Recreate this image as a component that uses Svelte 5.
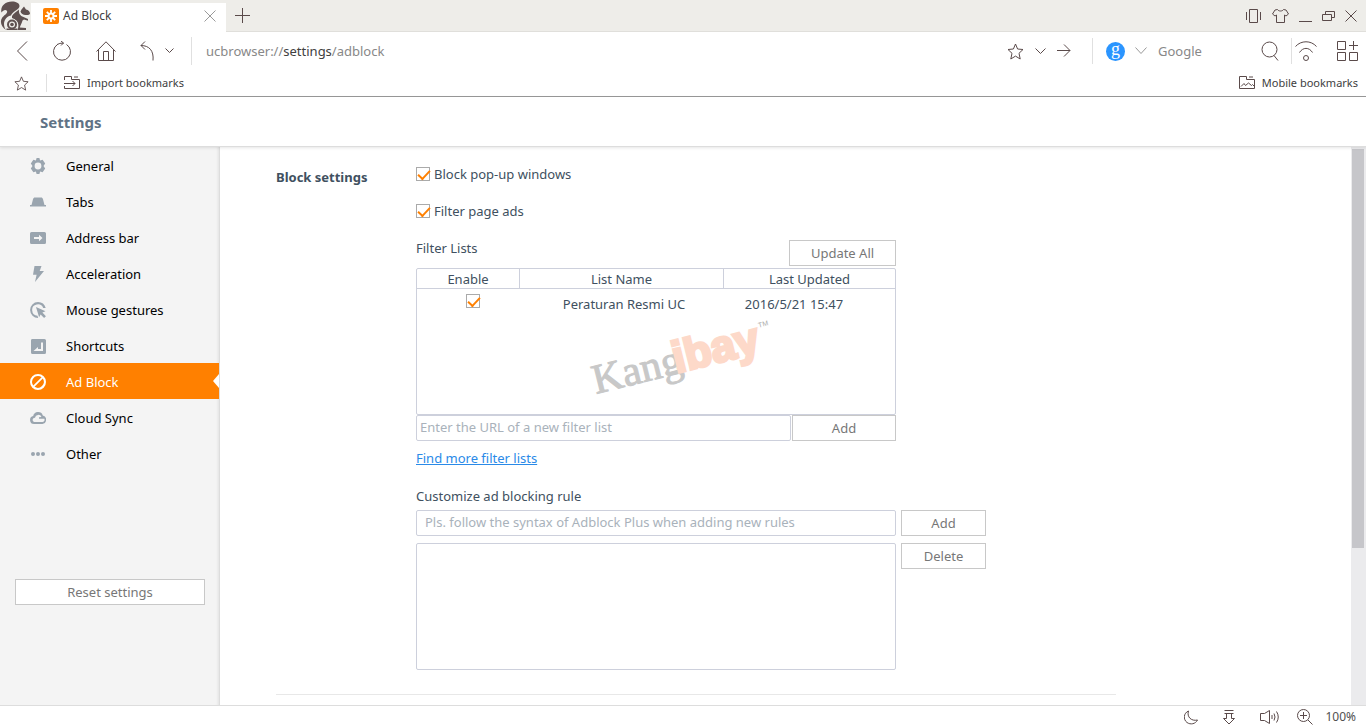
<script lang="ts">
    const menu = [
        { name: 'General', icon: 'M6.6 0h2.8l.7 2.5 2.5-.7 2.6 3.6L13.5 8l1.7 2.6-2.6 3.6-2.5-.7L9.4 16H6.6l-.7-2.5-2.5.7L.8 10.6 2.5 8 .8 5.4l2.6-3.6 2.5.7zM8 4.6a3.4 3.4 0 1 0 0 6.8 3.4 3.4 0 0 0 0-6.8z' },
        { name: 'Tabs', icon: 'M0 12.6v-1.6h1.5L3 5.2C3.3 4 4 3.5 5 3.5h6c1 0 1.7.5 2 1.7l1.5 5.8H16v1.6z' },
        { name: 'Address bar', icon: 'M1.5 2h13A1.5 1.5 0 0 1 16 3.5v9a1.5 1.5 0 0 1-1.5 1.5h-13A1.5 1.5 0 0 1 0 12.5v-9A1.5 1.5 0 0 1 1.5 2zM4 7v2h5v2.2L12.5 8 9 4.8V7z' },
        { name: 'Acceleration', icon: 'M4.5 0h7L9.7 5H14L5 16l1.6-7.3H3z' },
        { name: 'Mouse gestures', icon: 'M8 0a8 8 0 0 1 7.7 6h-2.5A5.7 5.7 0 1 0 7.5 13.7L8.2 16A8 8 0 1 1 8 0zM6 5l9.5 4.3-3.1 1.3 3.5 3.6-1.8 1.7-3.5-3.5-1.5 2.8z' },
        { name: 'Shortcuts', icon: 'M2 1h12.5A1.5 1.5 0 0 1 16 2.5v12a1.5 1.5 0 0 1-1.5 1.5H2.5A1.5 1.5 0 0 1 1 14.5v-12A1.5 1.5 0 0 1 2 1zM11 4.5V11H8V9l-4.5 4H13V4.5z' },
        { name: 'Ad Block', icon: 'M8 0a8 8 0 1 1 0 16A8 8 0 0 1 8 0zM8 2a6 6 0 0 0-4.7 9.6L11.6 3.3A6 6 0 0 0 8 2zM12.8 4.5L4.5 12.8A6 6 0 0 0 12.8 4.5z' },
        { name: 'Cloud Sync', icon: 'M4 14a4 4 0 0 1-.8-7.9A5 5 0 0 1 12.8 5.4 4.4 4.4 0 0 1 12.5 14zM4.2 12h8.2a2.4 2.4 0 0 0 2-3.2H9V7.2l2.5-.2A3.4 3.4 0 0 0 5 7.7 2.2 2.2 0 0 0 4.2 12z' },
        { name: 'Other', icon: 'M3 6a2 2 0 1 1 0 4 2 2 0 0 1 0-4zM8 6a2 2 0 1 1 0 4 2 2 0 0 1 0-4zM13 6a2 2 0 1 1 0 4 2 2 0 0 1 0-4z' }
    ];

    let current = $state('Ad Block');
    let blockPopups = $state(true);
    let filterAds = $state(true);
    let lists = $state([{ enabled: true, name: 'Peraturan Resmi UC', updated: '2016/5/21 15:47' }]);
    let listUrl = $state('');
    let rule = $state('');
    let rules = $state('');

    function addList() {
        if (!listUrl) return;
        lists.push({ enabled: true, name: listUrl, updated: '' });
        listUrl = '';
    }

    function addRule() {
        if (!rule) return;
        rules += rule + '\n';
        rule = '';
    }
</script>

<div class="browser">
    <header class="titlebar">
        <svg class="logo" width="31" height="31" viewBox="0 0 31 31" aria-hidden="true">
            <path d="M1.5 12.5C0 7 4.5 1.500 12 1.500c4 0 7.500 1.500 7.500 4.500 0 4-7 5-8.500 9.500C8 16 4 19 4 24c0 2.500.8 4.200 2 6C1.500 27.500-.500 22 2 18c2-3 6-4.500 5-7-1-1.800-4-1-5.500 1.500z" />
            <path d="M12 16c1.500-3 4-3.500 7-6.500C18.500 13 20 16 23.500 17l4.500 2v1.800l-4-1.300-1.500 1C22 23 20.500 25 19.800 27.500l6.200.5v2h-8.500c2-5 1-9.500-5.500-12z" />
            <path d="M20.500 11.500l1-2L24 6.500l2 3c2.500.500 4 2 4 4.500-1 1-2.500 1-4.500 1-2.500 0-4.500-1.500-5-3.500z" />
            <circle cx="12" cy="24.500" r="5.800" class="gap" />
            <circle cx="12" cy="24.500" r="4" class="ring" />
            <circle cx="12" cy="24.500" r="1.800" />
            <path d="M6.500 28.500h11V30h-11z" />
        </svg>
        <div class="tab">
            <svg width="16" height="16" viewBox="0 0 16 16" aria-hidden="true">
                <rect width="16" height="16" rx="2" fill="#ff8000" />
                <path d="M8 2v12M2 8h12M3.8 3.8l8.4 8.4M12.2 3.8l-8.4 8.4" stroke="#fff" stroke-width="1.8" />
                <circle cx="8" cy="8" r="3.5" fill="#fff" />
                <circle cx="8" cy="8" r="1.5" fill="#ff8000" />
            </svg>
            <span class="tab-title">Ad Block</span>
            <button class="icon light" aria-label="Close tab">
                <svg width="12" height="12" viewBox="0 0 12 12"><path d="M.5.500l11 11M11.500.500l-11 11" /></svg>
            </button>
        </div>
        <button class="icon new-tab" aria-label="New tab">
            <svg width="15" height="15" viewBox="0 0 15 15"><path d="M7.500 0v15M0 7.500h15" /></svg>
        </button>
        <div class="window-controls">
            <button class="icon" aria-label="Phone">
                <svg width="16" height="14" viewBox="0 0 16 14"><path d="M3.500.500h8v13h-8zM.5 3v8M14.500 3v8" /></svg>
            </button>
            <button class="icon" aria-label="Skins">
                <svg width="17" height="14" viewBox="0 0 17 14"><path d="M5.500.500c1 2 5 2 6 0l2.500.500 2.500 4-2.500 2-1.500-1v7.500h-8V6L3 7 .500 5 3 1z" /></svg>
            </button>
            <button class="icon" aria-label="Minimize">
                <svg width="13" height="14" viewBox="0 0 13 14"><path d="M0 12.500h13" /></svg>
            </button>
            <button class="icon" aria-label="Restore">
                <svg width="13" height="12" viewBox="0 0 13 12"><path d="M.5 4.500h9v6h-9zM3.500 4V1.500h9v6H10" /></svg>
            </button>
            <button class="icon" aria-label="Close">
                <svg width="12" height="12" viewBox="0 0 12 12"><path d="M.5.500l11 11M11.500.500l-11 11" /></svg>
            </button>
        </div>
    </header>

    <div class="toolbar">
        <div class="nav">
            <button class="icon" aria-label="Back">
                <svg width="12" height="20" viewBox="0 0 12 20"><path d="M11 .500l-9.500 9.500 9.500 9.500" /></svg>
            </button>
            <button class="icon" aria-label="Reload">
                <svg width="20" height="20" viewBox="0 0 20 20"><path d="M5.500 3.500A8.500 8.500 0 1 0 14.500 3.500M5 3.600Q7.500 2 11.500 2M9 0l2.500 2L9 4.500" /></svg>
            </button>
            <button class="icon" aria-label="Home">
                <svg width="20" height="20" viewBox="0 0 20 20"><path d="M.5 10.500L10 .8l9.500 9.700M2.500 9v10.500h15V9M7.500 19.500v-9h5v9" /></svg>
            </button>
            <button class="icon" aria-label="Undo">
                <svg width="14" height="20" viewBox="0 0 14 20"><path d="M5 .500l-4 4 4 4M1 4.500c8 0 13 5 12 15" /></svg>
            </button>
            <button class="icon" aria-label="Closed tabs">
                <svg width="9" height="6" viewBox="0 0 9 6"><path d="M.5.500l4 4 4-4" /></svg>
            </button>
        </div>
        <div class="address" role="textbox" tabindex="0" aria-label="Address" contenteditable="true">ucbrowser://<b>settings</b>/adblock</div>
        <div class="page-actions">
            <button class="icon" aria-label="Bookmark page">
                <svg width="17" height="17" viewBox="0 0 17 17"><path d="M8.500 1l2.100 5 5.400.5-4 3.800 1.200 5.700-4.700-2.900L3.800 16 5 10.300 1 6.500 6.400 6z" /></svg>
            </button>
            <button class="icon" aria-label="History">
                <svg width="11" height="7" viewBox="0 0 11 7"><path d="M.5.500l5 5 5-5" /></svg>
            </button>
            <button class="icon" aria-label="Go">
                <svg width="14" height="14" viewBox="0 0 14 14"><path d="M0 6.500h13M7 .500l6 6-6 6" /></svg>
            </button>
        </div>
        <div class="search">
            <span class="engine" aria-hidden="true">g</span>
            <button class="icon light" aria-label="Search engine">
                <svg width="12" height="8" viewBox="0 0 12 8"><path d="M.5.500L6 6.500 11.500.500" /></svg>
            </button>
            <input type="text" placeholder="Google" aria-label="Search" />
            <button class="icon" aria-label="Search">
                <svg width="18" height="20" viewBox="0 0 18 20"><circle cx="8.5" cy="8.5" r="7.5" /><path d="M13 14.500l4 5" /></svg>
            </button>
        </div>
        <div class="extras">
            <button class="icon" aria-label="Wi-Fi">
                <svg width="22" height="20" viewBox="0 0 22 20"><path d="M.5 5.500C6-.8 16-.8 21.500 5.500M4.500 11.500c3.500-5.500 9.500-5.500 13 0" /><circle cx="11" cy="17" r="2.5" /></svg>
            </button>
            <button class="icon" aria-label="Apps">
                <svg width="21" height="20" viewBox="0 0 21 20"><path d="M.5.500h8v8h-8zM.5 11.500h8v8h-8zM12.500 11.500h8v8h-8zM16.500 0v9M12 4.500h9" /></svg>
            </button>
        </div>
    </div>

    <div class="bookmarks">
        <button class="icon star" aria-label="Bookmarks">
            <svg width="15" height="15" viewBox="0 0 17 17"><path d="M8.500 1l2.100 5 5.400.5-4 3.800 1.200 5.700-4.700-2.900L3.800 16 5 10.300 1 6.500 6.400 6z" /></svg>
        </button>
        <button class="bookmark import">
            <svg width="17" height="14" viewBox="0 0 17 14"><path d="M.5 4V.500h7v3h8v9H.500V10M0 7.500h11M8.500 5l2.500 2.500L8.500 10M10 1h4" /></svg>
            Import bookmarks
        </button>
        <button class="bookmark mobile">
            <svg width="17" height="14" viewBox="0 0 17 14"><path d="M.5.500h7v3h8v9H.500zM10 1h4M2 10.500l3-3 1.500 2 3-2.500 3 2.500 1-1 2 2" /></svg>
            Mobile bookmarks
        </button>
    </div>

    <h1>Settings</h1>

    <div class="page">
        <nav class="sidebar">
            {#each menu as item}
                <button class="item" class:active={current === item.name} onclick={() => (current = item.name)}>
                    <svg width="16" height="16" viewBox="0 0 16 16" aria-hidden="true">
                        <path fill-rule="evenodd" d={item.icon} />
                    </svg>
                    {item.name}
                </button>
            {/each}
            <button class="plain reset">Reset settings</button>
        </nav>

        <main>
            <section>
                <h2>Block settings</h2>
                <div class="fields">
                    <label class="check"><input type="checkbox" bind:checked={blockPopups} />Block pop-up windows</label>
                    <label class="check"><input type="checkbox" bind:checked={filterAds} />Filter page ads</label>

                    <div class="lists">
                        <div class="lists-head">
                            <span>Filter Lists</span>
                            <button class="plain update">Update All</button>
                        </div>
                        <div class="list-box">
                            <table>
                                <thead>
                                    <tr><th>Enable</th><th>List Name</th><th>Last Updated</th></tr>
                                </thead>
                                <tbody>
                                    {#each lists as list}
                                        <tr>
                                            <td class="enable"><input type="checkbox" aria-label="Enable {list.name}" bind:checked={list.enabled} /></td>
                                            <td class="name">{list.name}</td>
                                            <td class="updated">{list.updated}</td>
                                        </tr>
                                    {/each}
                                </tbody>
                            </table>
                            <svg class="watermark" width="220" height="110" viewBox="0 0 220 110" aria-hidden="true">
                                <g transform="translate(22 88) rotate(-14)">
                                    <text class="kang" x="0" y="0">Kang</text>
                                    <text class="ibay" x="83" y="-1">ibay</text>
                                    <text class="tm" x="174" y="-25">TM</text>
                                </g>
                            </svg>
                        </div>
                        <div class="add-list">
                            <input type="text" aria-label="Filter list URL" placeholder="Enter the URL of a new filter list" bind:value={listUrl} />
                            <button class="plain" onclick={addList}>Add</button>
                        </div>
                    </div>

                    <a href="#lists">Find more filter lists</a>

                    <label class="rule-label" for="rule">Customize ad blocking rule</label>
                    <div class="rules">
                        <input id="rule" type="text" placeholder="Pls. follow the syntax of Adblock Plus when adding new rules" bind:value={rule} />
                        <button class="plain" onclick={addRule}>Add</button>
                        <textarea aria-label="Rules" bind:value={rules}></textarea>
                        <button class="plain" onclick={() => (rules = '')}>Delete</button>
                    </div>
                </div>
            </section>
        </main>

        <div class="scrollbar"><div class="thumb"></div></div>
    </div>

    <footer>
        <button class="icon" aria-label="Night mode">
            <svg width="14" height="15" viewBox="0 0 14 15"><path d="M4.500 1C-.5 3-1 9.500 3 12.500c3.500 2.500 8.500 1.500 10.500-2.500C7.500 11.500 2.500 7 4.500 1z" /></svg>
        </button>
        <button class="icon" aria-label="Downloads">
            <svg width="14" height="15" viewBox="0 0 14 15"><path d="M2.500.500h9M2.500 3.500h9M4.500 3.500v5h-3L7 14l5.500-5.500h-3v-5" /></svg>
        </button>
        <button class="icon" aria-label="Sound">
            <svg width="19" height="14" viewBox="0 0 19 14"><path d="M4.500 3.500h-4v7h4l5 3V.500zM12 5v4M14 3.500q2 3.500 0 7M16.500 1.500q3.500 5.500 0 11" /></svg>
        </button>
        <button class="icon" aria-label="Zoom in">
            <svg width="16" height="16" viewBox="0 0 16 16"><circle cx="6.5" cy="6.5" r="6" /><path d="M6.500 3v7M3 6.500h7M11 11l4.500 4.500" /></svg>
        </button>
        <span>100%</span>
    </footer>
</div>

<style>
    :global(body) {
        margin: 0;
        background-color: #fff;
    }

    .browser {
        height: 100vh;
        display: flex;
        flex-direction: column;
        overflow: hidden;
        font: 13px/18px "Noto Sans", sans-serif;
        color: #405060;
    }

    .browser * {
        box-sizing: border-box;
    }

    button, input, textarea {
        margin: 0;
        padding: 0;
        font: inherit;
        color: inherit;
        outline: none;
    }

    button {
        border: none;
        background: none;
    }

    svg {
        display: block;
        flex: none;
    }

    .icon, .bookmark {
        display: flex;
        align-items: center;
        justify-content: center;
    }

    .icon svg, .bookmark svg {
        fill: none;
        stroke: #5a4a4a;
    }

    .icon.light svg {
        stroke: #999;
    }

    /* Title bar */
    .titlebar {
        height: 32px;
        flex: none;
        display: flex;
        align-items: center;
        background-color: #eeede9;
        border-bottom: 1px solid #e0dfdb;
    }

    .logo {
        fill: #5f5150;
    }

    .logo .gap {
        fill: #eeede9;
    }

    .logo .ring {
        fill: none;
        stroke: #5f5150;
        stroke-width: 2px;
    }

    .tab {
        width: 195px;
        height: 29px;
        margin-bottom: -4px;
        padding: 0 10px 4px 12px;
        display: flex;
        align-items: center;
        gap: 4px;
        background-color: #fff;
        font-size: 12px;
        color: #404040;
    }

    .tab-title {
        flex: 1;
    }

    .new-tab {
        margin-left: 9px;
    }

    .window-controls {
        margin-left: auto;
        padding-right: 9px;
        display: flex;
        align-items: center;
        gap: 10px;
    }

    /* Toolbar */
    .toolbar {
        height: 38px;
        flex: none;
        display: flex;
        align-items: center;
    }

    .nav {
        height: 28px;
        padding: 0 17px 0 16px;
        display: flex;
        align-items: center;
        gap: 24px;
        border-right: 1px solid #e0e0e0;
    }

    .nav .icon:last-child {
        margin-left: -13px;
    }

    .address {
        flex: 1;
        padding-left: 14px;
        color: #888;
        outline: none;
    }

    .address b {
        font-weight: normal;
        color: #404040;
    }

    .page-actions {
        height: 26px;
        padding-right: 21px;
        display: flex;
        align-items: center;
        gap: 11px;
        border-right: 1px solid #e0e0e0;
    }

    .search {
        width: 199px;
        height: 26px;
        padding: 0 12px 0 13px;
        display: flex;
        align-items: center;
        border-right: 1px solid #e0e0e0;
    }

    .engine {
        width: 19px;
        height: 19px;
        margin-right: 10px;
        flex: none;
        border-radius: 50%;
        background-color: #2b95ff;
        color: #fff;
        font: 18px/14px "Liberation Serif", serif;
        text-align: center;
    }

    .extras {
        padding: 0 8px 0 3px;
        display: flex;
        gap: 20px;
    }

    /* Bookmarks bar */
    .bookmarks {
        height: 27px;
        flex: none;
        padding: 0 8px 0 14px;
        display: flex;
        align-items: center;
        border-bottom: 1px solid #999;
        font-size: 11px;
        color: #404040;
    }

    .star {
        height: 18px;
        padding-right: 17px;
        border-right: 1px solid #e0e0e0;
    }

    .bookmark {
        gap: 6px;
    }

    .import {
        margin-left: 17px;
    }

    .mobile {
        margin-left: auto;
    }

    h1 {
        height: 50px;
        flex: none;
        margin: 0;
        padding-left: 40px;
        border-bottom: 1px solid #ddd;
        box-shadow: 0 1px 3px rgba(0, 0, 0, .1);
        font-size: 15px;
        line-height: 51px;
        color: #5f7285;
        position: relative;
    }

    .page {
        min-height: 0;
        flex: 1;
        display: flex;
    }

    /* Sidebar */
    .sidebar {
        width: 220px;
        flex: none;
        display: flex;
        flex-direction: column;
        background-color: #f4f4f4;
        border-right: 1px solid #ddd;
        box-shadow: inset -3px 0 3px -2px rgba(0, 0, 0, .08);
    }

    .item {
        height: 36px;
        padding: 2px 0 0 30px;
        display: flex;
        align-items: center;
        gap: 20px;
        color: #000;
        position: relative;
    }

    .item svg {
        fill: #9aa5af;
    }

    .item.active {
        background-color: #ff8000;
        color: #fff;
    }

    .item.active svg {
        fill: #fff;
    }

    .item.active::after {
        content: "";
        position: absolute;
        top: 11px;
        right: 0;
        border: 7px solid transparent;
        border-left: none;
        border-right: 6px solid #fff;
    }

    .plain {
        height: 26px;
        background-color: #fff;
        border: 1px solid #c8c8c8;
        color: #777;
    }

    .reset {
        margin: auto 14px 100px 15px;
    }

    /* Content */
    main {
        min-width: 0;
        flex: 1;
        overflow: hidden;
        padding: 18px 56px 0;
    }

    section {
        max-width: 840px;
        padding-bottom: 24px;
        display: flex;
        border-bottom: 1px solid #e8e8e8;
    }

    h2 {
        width: 140px;
        flex: none;
        margin: 0;
        font-size: 13px;
        line-height: 24px;
    }

    .fields {
        width: 570px;
        display: flex;
        flex-direction: column;
        align-items: flex-start;
    }

    .check {
        height: 18px;
        margin-bottom: 19px;
        display: flex;
        align-items: center;
        gap: 4px;
    }

    input[type="checkbox"] {
        appearance: none;
        width: 14px;
        height: 14px;
        flex: none;
        background-color: #fff;
        border: 1px solid #aaa;
        position: relative;
    }

    input[type="checkbox"]:checked::before {
        content: "";
        width: 10px;
        height: 5px;
        position: absolute;
        top: 2px;
        left: 1px;
        border: solid #ff8000;
        border-width: 0 0 2px 2px;
        transform: rotate(-47deg);
    }

    .lists {
        width: 480px;
    }

    .lists-head {
        height: 29px;
        display: flex;
        justify-content: space-between;
    }

    .update {
        width: 107px;
        margin-top: 1px;
    }

    .list-box {
        height: 147px;
        border: 1px solid #cdd0dc;
        border-radius: 2px;
        position: relative;
    }

    table {
        width: 100%;
        table-layout: fixed;
        border-spacing: 0;
    }

    th {
        height: 20px;
        padding: 0;
        border-bottom: 1px solid #cdd0dc;
        font-weight: normal;
    }

    th + th {
        border-left: 1px solid #cdd0dc;
    }

    th:nth-child(1) {
        width: 102px;
    }

    th:nth-child(2) {
        width: 204px;
    }

    td {
        padding: 5px 0 0;
        text-align: center;
        vertical-align: top;
    }

    .enable {
        padding: 5px 0 0 10px;
    }

    .enable input {
        display: block;
        margin: 0 auto;
    }

    .name {
        padding: 6px 0 0 6px;
    }

    .updated {
        padding: 6px 30px 0 0;
    }

    .watermark {
        position: absolute;
        top: 37px;
        left: 157px;
        pointer-events: none;
    }

    .kang {
        font: 42px "Liberation Serif", serif;
        fill: #c8c8c8;
        stroke: #c8c8c8;
        stroke-width: 1px;
    }

    .ibay {
        font: bold 44px "Liberation Sans", sans-serif;
        fill: #fdd9c9;
        stroke: #fdd9c9;
        stroke-width: 3px;
    }

    .tm {
        font: 7px "Liberation Sans", sans-serif;
        fill: #aaa;
    }

    input[type="text"], textarea {
        background-color: #fff;
        border: 1px solid #cdd0dc;
        border-radius: 2px;
    }

    input[type="text"]::placeholder {
        color: #a9b2bb;
        opacity: 1;
    }

    .search input[type="text"] {
        min-width: 0;
        flex: 1;
        padding-left: 11px;
        border: none;
        color: #404040;
    }

    .search input[type="text"]::placeholder {
        color: #888;
    }

    .add-list {
        display: grid;
        grid-template-columns: 1fr 104px;
        gap: 1px;
    }

    .add-list input {
        padding: 0 3px 2px;
    }

    a {
        margin-top: 8px;
        color: #2a8ae8;
    }

    .rule-label {
        margin: 20px 0 5px;
    }

    .rules {
        width: 100%;
        display: grid;
        grid-template-columns: 480px 1fr;
        gap: 7px 5px;
    }

    .rules input {
        padding: 0 8px 2px;
    }

    textarea {
        height: 127px;
        resize: none;
    }

    .scrollbar {
        width: 15px;
        flex: none;
        padding: 2px 2px 0 1px;
        background-color: #ebebed;
    }

    .thumb {
        height: 399px;
        background-color: #c6c6ca;
    }

    footer {
        height: 21px;
        flex: none;
        padding: 2px 10px 0 0;
        display: flex;
        align-items: center;
        justify-content: flex-end;
        gap: 24px;
        border-top: 1px solid #ddd;
        color: #505050;
        font-size: 12px;
    }

    footer .icon:nth-of-type(4) {
        margin-left: -6px;
    }

    footer span {
        margin-left: -12px;
    }
</style>
